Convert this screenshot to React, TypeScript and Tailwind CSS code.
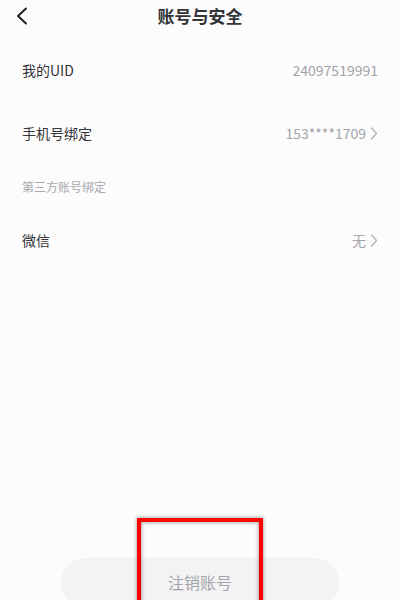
const font = { fontFamily: '"Noto Sans CJK SC", "Noto Sans", sans-serif' }

function Arrow() {
  return (
    <svg width="8" height="13" viewBox="0 0 8 13" className="ml-[4px]">
      <polyline points="1.5,1 6.5,6.5 1.5,12" fill="none" stroke="#b0b0b6" strokeWidth="1.3" strokeLinecap="round" strokeLinejoin="round" />
    </svg>
  )
}

function Row({ label, value, arrow }: { label: string; value: string; arrow?: boolean }) {
  return (
    <div className="flex items-center justify-between h-[63px] pl-[22px] pr-[22px]">
      <span className="text-[14px] text-[#333338]">{label}</span>
      <span className="flex items-center text-[14px] text-[#a3a3aa]">
        {value}
        {arrow && <Arrow />}
      </span>
    </div>
  )
}

export default function App() {
  return (
    <div className="relative w-[400px] h-[600px] overflow-hidden bg-[#fcfcfd]" style={font}>
      {/* Header */}
      <div className="relative flex items-center justify-center h-[32px]">
        <svg width="14" height="18" viewBox="0 0 14 18" className="absolute left-[15px] top-[7px]">
          <polyline points="11,1.5 3,9 11,16.5" fill="none" stroke="#222226" strokeWidth="2" strokeLinecap="round" strokeLinejoin="round" />
        </svg>
        <h1 className="text-[17px] font-bold text-[#333338]">账号与安全</h1>
      </div>

      <div className="mt-[7px]">
        <Row label="我的UID" value="24097519991" />
        <Row label="手机号绑定" value="153****1709" arrow />
        <div className="pl-[22px] h-[44px] flex items-center text-[12px] text-[#a9a9ae]">第三方账号绑定</div>
        <Row label="微信" value="无" arrow />
      </div>

      {/* Bottom button */}
      <div className="absolute left-[61px] right-[61px] top-[558px] h-[48px] rounded-full bg-[#f3f3f5] flex items-center justify-center">
        <span className="text-[16px] text-[#a3a3aa]">注销账号</span>
      </div>

      {/* Annotation box */}
      <div className="absolute left-[137px] top-[518px] w-[126px] h-[100px] border-[4px] border-[#ff0000] shadow-[0_0_4px_rgba(0,0,0,0.45),inset_0_0_4px_rgba(0,0,0,0.45)]" />
    </div>
  )
}
